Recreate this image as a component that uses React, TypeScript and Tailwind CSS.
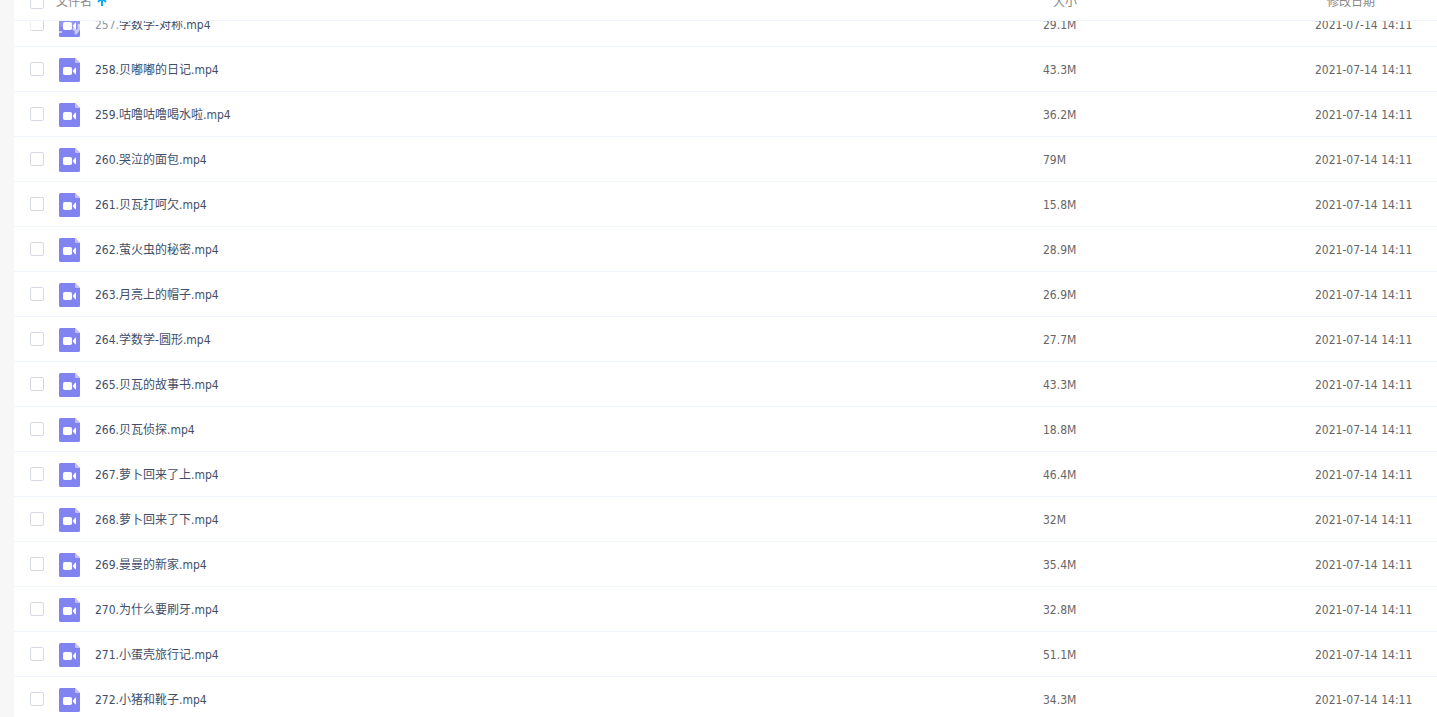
const FILES = [
  { name: '257.学数学-对称.mp4', size: '29.1M' },
  { name: '258.贝嘟嘟的日记.mp4', size: '43.3M' },
  { name: '259.咕噜咕噜喝水啦.mp4', size: '36.2M' },
  { name: '260.哭泣的面包.mp4', size: '79M' },
  { name: '261.贝瓦打呵欠.mp4', size: '15.8M' },
  { name: '262.萤火虫的秘密.mp4', size: '28.9M' },
  { name: '263.月亮上的帽子.mp4', size: '26.9M' },
  { name: '264.学数学-圆形.mp4', size: '27.7M' },
  { name: '265.贝瓦的故事书.mp4', size: '43.3M' },
  { name: '266.贝瓦侦探.mp4', size: '18.8M' },
  { name: '267.萝卜回来了上.mp4', size: '46.4M' },
  { name: '268.萝卜回来了下.mp4', size: '32M' },
  { name: '269.曼曼的新家.mp4', size: '35.4M' },
  { name: '270.为什么要刷牙.mp4', size: '32.8M' },
  { name: '271.小蛋壳旅行记.mp4', size: '51.1M' },
  { name: '272.小猪和靴子.mp4', size: '34.3M' },
];

const MODIFIED = '2021-07-14 14:11';

function VideoIcon() {
  return (
    <svg className="h-6 w-[21px] shrink-0" viewBox="0 0 21 24" aria-hidden="true">
      <path d="M1.5 0H16l5 5v17.5a1.5 1.5 0 0 1-1.5 1.5h-18A1.5 1.5 0 0 1 0 22.5v-21A1.5 1.5 0 0 1 1.5 0z" fill="#8183f1" />
      <path d="M16 0l5 5h-4a1 1 0 0 1-1-1z" fill="#c0c1f8" />
      <rect x="4" y="9" width="9" height="8" rx="1.8" fill="#fff" />
      <path d="M13.8 13q0-.6.5-1.1L16 9.9q1-.7 1 .3v5.6q0 1-1 .3l-1.700-2q-.5-.5-.5-1.100z" fill="#fff" />
    </svg>
  );
}

function Checkbox({ label }: { label: string }) {
  return (
    <input
      type="checkbox"
      aria-label={label}
      className="block h-3.5 w-3.5 shrink-0 appearance-none rounded-xs border border-[#d5dae2] bg-white checked:bg-[#06a7ff]"
    />
  );
}

function Columns() {
  return (
    <colgroup>
      <col />
      <col className="w-[272px]" />
      <col className="w-[122px]" />
    </colgroup>
  );
}

// faint white mark lying over the row under the header
function RowMark() {
  return (
    <svg className="pointer-events-none absolute top-0 left-2.5 h-6 w-24" viewBox="0 0 96 24" aria-hidden="true">
      <g fill="#fff">
        <path d="M0 0h14v9H0z" opacity="0.6" />
        <path d="M35 0h21v6H35z" opacity="0.15" />
        <path d="M70 0h25v13H70z" opacity="0.4" />
        <path d="M35 10h3v2h-3z" opacity="0.6" />
      </g>
      <path d="M49 7l3 3M55 3q1 6-4 10" fill="none" stroke="#fff" strokeWidth="2.5" opacity="0.6" />
    </svg>
  );
}

export default function App() {
  return (
    <div className="h-screen overflow-hidden bg-[#f7f7f7] pl-3.5 font-['DejaVu_Sans_Condensed','Noto_Sans_CJK_SC',sans-serif] text-xs">
      <main className="min-h-full bg-white">
        {/* header stays above the scrolled list */}
        <div className="relative z-10 -mt-4 bg-white">
          <table className="w-full table-fixed border-collapse text-left text-[#888]">
            <Columns />
            <thead>
              <tr className="h-9 border-b border-[#f0f5fd]">
                <th className="p-0 pl-4 font-normal">
                  <div className="flex items-center">
                    <Checkbox label="全选" />
                    <button className="ml-3 flex items-center gap-1">
                      文件名
                      <svg className="h-3 w-3" viewBox="0 0 12 12" fill="none" stroke="#09aaff" strokeWidth="2" aria-hidden="true">
                        <path d="M6 10V2M2 6l4-4 4 4" />
                      </svg>
                    </button>
                  </div>
                </th>
                <th className="p-0 pl-2.5 font-normal">大小</th>
                <th className="p-0 pl-3 font-normal">修改日期</th>
              </tr>
            </thead>
          </table>
          <div className="relative">
            <RowMark />
          </div>
        </div>

        <div className="-mt-[19px]">
          <table className="w-full table-fixed border-collapse">
            <Columns />
            <tbody>
              {FILES.map((file) => (
                <tr key={file.name} className="h-[45px] border-b border-[#f0f5fd]">
                  <td className="p-0 pl-4">
                    <div className="flex items-center">
                      <Checkbox label={file.name} />
                      <a href="#" className="ml-[15px] flex items-center gap-[15px] pt-0.5 text-[#424e67]">
                        <VideoIcon />
                        {file.name}
                      </a>
                    </div>
                  </td>
                  <td className="p-0 pt-0.5 text-[#666]">{file.size}</td>
                  <td className="p-0 pt-0.5 text-[#666]">{MODIFIED}</td>
                </tr>
              ))}
            </tbody>
          </table>
        </div>
      </main>
    </div>
  );
}
